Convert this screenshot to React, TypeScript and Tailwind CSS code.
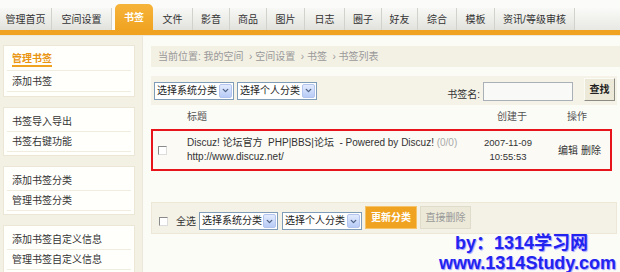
import { ChevronDown } from 'lucide-react';

const tabs = [
  { label: '管理首页', w: 'w-[52px]' },
  { label: '空间设置', w: 'w-[60px]' },
  { label: '书签', w: 'w-[38px]', active: true },
  { label: '文件', w: 'w-[40px]' },
  { label: '影音', w: 'w-[37px]' },
  { label: '商品', w: 'w-[37px]' },
  { label: '图片', w: 'w-[38px]' },
  { label: '日志', w: 'w-[40px]' },
  { label: '圈子', w: 'w-[37px]' },
  { label: '好友', w: 'w-[36px]' },
  { label: '综合', w: 'w-[39px]' },
  { label: '模板', w: 'w-[38px]' },
  { label: '资讯/等级审核', w: 'w-[80px]' },
];

const sideGroups = [
  ['添加书签'],
  ['书签导入导出', '书签右键功能'],
  ['添加书签分类', '管理书签分类'],
  ['添加书签自定义信息', '管理书签自定义信息'],
];

function FakeSelect({ label, className }: { label: string; className: string }) {
  return (
    <div className={`flex items-center h-[18px] border border-[#7f9db9] bg-white ${className}`}>
      <span className="flex-1 pl-[2px] text-[10px] leading-[16px] text-[#222]">{label}</span>
      <span className="w-[13px] h-[14px] mr-[1px] flex items-center justify-center rounded-[2px] border border-[#b3c5ee] bg-gradient-to-b from-[#e3ebfd] to-[#b7cbf6]">
        <ChevronDown className="w-[9px] h-[9px] text-[#4d6185]" strokeWidth={3.5} />
      </span>
    </div>
  );
}

function CheckBox() {
  return (
    <span className="inline-block w-[9px] h-[9px] bg-white border border-t-[#8a8a8a] border-l-[#8a8a8a] border-b-[#dcdcdc] border-r-[#dcdcdc]" />
  );
}

export default function App() {
  return (
    <div className="w-[620px] h-[272px] overflow-hidden bg-[#fcfcf7] text-[#333] [font-family:'Liberation_Sans','Noto_Sans_CJK_SC',sans-serif]">
      {/* Tabs */}
      <div className="flex items-end h-[30px] bg-[#fbfbf9]">
        {tabs.map((t) =>
          t.active ? (
            <div
              key={t.label}
              className={`${t.w} ml-[3px] h-[26px] flex items-center justify-center rounded-t-[5px] bg-gradient-to-b from-[#f6b43a] to-[#f0a320] text-white font-bold text-[10px]`}
            >
              {t.label}
            </div>
          ) : (
            <div
              key={t.label}
              className={`${t.w} h-[22px] flex items-center justify-center border-r border-[#d2d2cc] bg-gradient-to-b from-[#f8f8f6] to-[#e2e2dd] text-[10px] text-[#333]`}
            >
              {t.label}
            </div>
          )
        )}
        <div className="flex-1 h-[22px] bg-gradient-to-b from-[#fafaf8] to-[#e8e8e4]" />
      </div>
      <div className="h-[5px] bg-[#f0a321]" />
      <div className="h-[1px] bg-[#ece8dc]" />

      <div className="flex">
        {/* Sidebar */}
        <div className="w-[143px] shrink-0 h-[240px] bg-[#f3f0e4] border-r border-[#ebe7da] pt-[9px] pl-[3px] pr-[7px] flex flex-col gap-[10px]">
          <div className="bg-[#fffffc] border border-[#ebe6d6] pt-[3px] pb-[4px] px-[3px]">
            <div className="h-[22px] border-b border-[#f0ecdf] pl-[5px] flex items-center">
              <span className="text-[10px] font-bold text-[#e99512] border-b-2 border-[#f0a321] leading-[13px]">管理书签</span>
            </div>
            {sideGroups[0].map((s) => (
              <div key={s} className="h-[21px] border-b border-[#f0ecdf] pl-[5px] flex items-center text-[10px]">
                {s}
              </div>
            ))}
          </div>
          {sideGroups.slice(1).map((g, i) => (
            <div key={i} className="bg-[#fffffc] border border-[#ebe6d6] pt-[4px] pb-[3px] px-[3px]">
              {g.map((s) => (
                <div key={s} className="h-[20px] border-b border-[#f0ecdf] pl-[5px] flex items-center text-[10px]">
                  {s}
                </div>
              ))}
            </div>
          ))}
        </div>

        {/* Main */}
        <div className="flex-1 pl-[8px] pr-[3px]">
          <div className="mt-[10px] -mr-[3px] h-[21px] bg-[#f3f0e4] pl-[7px] flex items-center text-[10px] text-[#999]">
            当前位置: 我的空间 &nbsp;› 空间设置 &nbsp;› 书签 &nbsp;› 书签列表
          </div>

          <div className="mt-[8px] h-[30px] bg-[#f5f2e8] border-t border-[#fdfcf8] flex items-center pl-[3px] pr-[2px]">
            <FakeSelect label="选择系统分类" className="w-[80px]" />
            <FakeSelect label="选择个人分类" className="w-[80px] ml-[3px]" />
            <div className="flex-1" />
            <span className="text-[10px] mt-[7px] text-[#333]">书签名:</span>
            <div className="ml-[3px] mt-[2px] w-[90px] h-[19px] bg-[#f9f9f7] border border-[#a9b0b8]" />
            <button className="ml-[11px] mb-[3px] w-[31px] h-[23px] bg-[#ece9d8] border border-t-[#fbfbf6] border-l-[#fbfbf6] border-b-[#8c8c84] border-r-[#8c8c84] text-[10px] text-[#222] font-bold">
              查找
            </button>
          </div>

          <div className="h-[22px] flex items-center text-[10px] text-[#555]">
            <span className="w-[36px]" />
            <span className="w-[305px]">标题</span>
            <span className="w-[40px] text-center">创建于</span>
            <span className="ml-[35px]">操作</span>
          </div>

          <div className="mt-[2px] w-[461px] h-[42px] border-2 border-[#e8141c] bg-[#fbfaf5] flex items-center">
            <div className="w-[34px] pl-[5px] flex items-center">
              <CheckBox />
            </div>
            <div className="w-[290px] text-[10px] leading-[14px]">
              <div className="whitespace-nowrap">
                Discuz! 论坛官方&nbsp; PHP|BBS|论坛&nbsp; - Powered by Discuz! <span className="text-[#aaa]">(0/0)</span>
              </div>
              <div>http://www.discuz.net/</div>
            </div>
            <div className="w-[62px] text-center text-[9.5px] leading-[14px]">
              <div>2007-11-09</div>
              <div>10:55:53</div>
            </div>
            <div className="flex-1 pl-[10px] text-center text-[10px]">编辑&nbsp;删除</div>
          </div>

          <div className="mt-[31px] h-[32px] bg-[#f4f1e6] border border-[#ece7d6] flex items-end pb-[3px] pl-[7px]">
            <span className="mb-[4px] flex">
              <CheckBox />
            </span>
            <span className="ml-[8px] mb-[1px] text-[10px] leading-[14px]">全选</span>
            <FakeSelect label="选择系统分类" className="ml-[3px] w-[79px]" />
            <FakeSelect label="选择个人分类" className="ml-[4px] w-[80px]" />
            <button className="ml-[3px] mb-[1px] w-[52px] h-[23px] bg-[#f0a321] border border-[#f4c46a] text-white font-bold text-[10px]">
              更新分类
            </button>
            <button className="ml-[3px] mb-[1px] w-[51px] h-[23px] bg-[#ece9d8] border border-[#e0dccb] text-[#999] text-[10px]">
              直接删除
            </button>
          </div>

          <div className="ml-[304px] -mt-[1px] text-[18px] leading-[20px] font-bold text-[#2323f0] whitespace-nowrap [text-shadow:1px_1px_1px_#9a9aff]">
            by：1314学习网
          </div>
          <div className="ml-[288px] text-[18px] leading-[20px] font-bold text-[#2323f0] whitespace-nowrap [text-shadow:1px_1px_1px_#9a9aff]">
            www.1314Study.com
          </div>
        </div>
      </div>
    </div>
  );
}
